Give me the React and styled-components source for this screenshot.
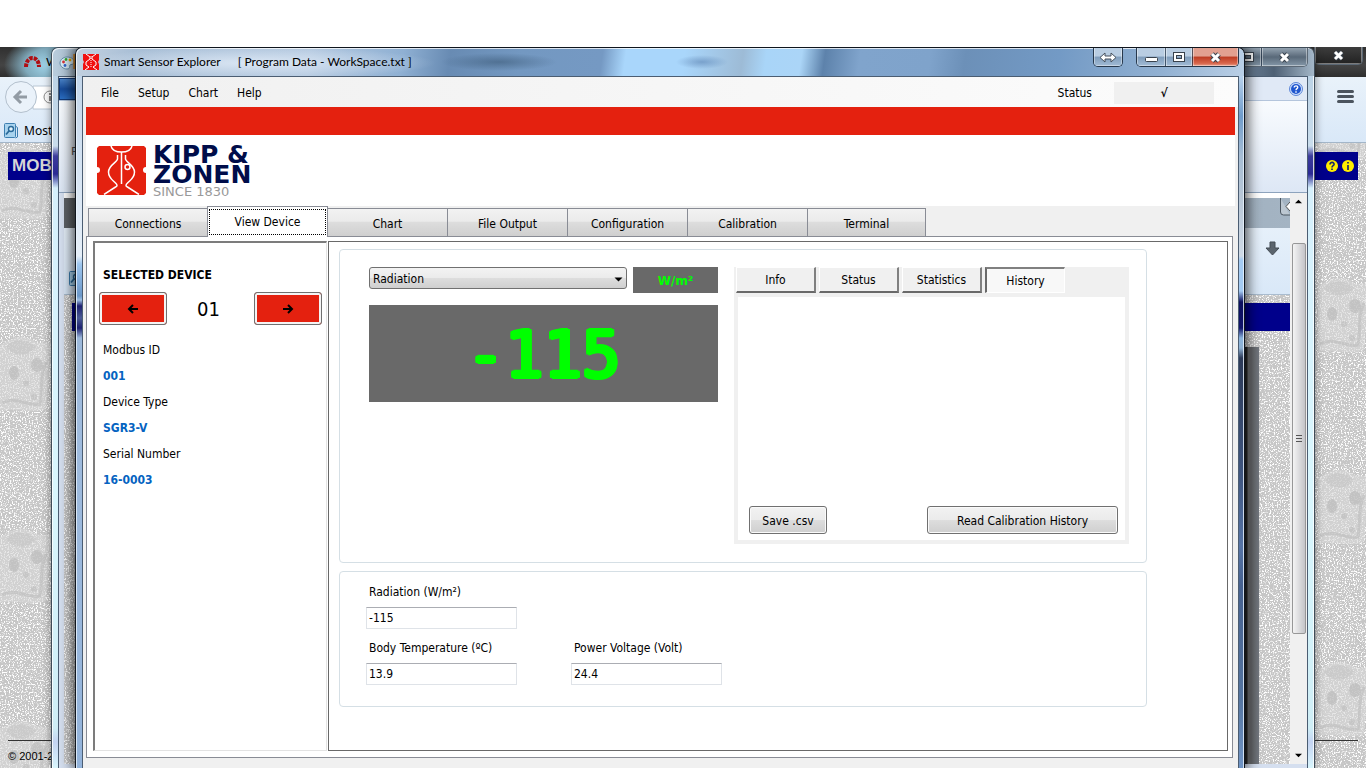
import React, { useState } from "react";
import styled, { createGlobalStyle, css } from "styled-components";

const GlobalStyle = createGlobalStyle`
  *, *::before, *::after { box-sizing: border-box; }
  html, body { margin: 0; height: 100%; overflow: hidden; background: #fff; }
  body { font-family: "DejaVu Sans Condensed", "DejaVu Sans", sans-serif; font-size: 12px; color: #000; }
  button, input, select { font: inherit; color: inherit; margin: 0; }
  button { cursor: default; }
`;

const uiFont = `Lato, "Noto Sans", sans-serif`;
const red = "#e4210f";
const navy = "#00008b";

/* ---------- desktop and window frames ---------- */

const Desktop = styled.div`
  position: relative;
  height: 100vh;
  overflow: hidden;
  background: #fff;
`;

const WindowFrame = styled.section`
  position: absolute;
  top: 47px;
  bottom: 0;
  left: ${(p) => p.$left}px;
  right: ${(p) => p.$right}px;
  display: flex;
  flex-direction: column;
  overflow: hidden;
`;

const GlassWindow = styled(WindowFrame)`
  border: 1px solid ${(p) => (p.$active ? "#10161e" : "#3f4c58")};
  border-bottom: 0;
  border-radius: 7px 7px 0 0;
  box-shadow: 0 0 ${(p) => (p.$active ? "14px 2px rgba(0, 0, 0, 0.75)" : "8px rgba(0, 0, 0, 0.45)")};
  clip-path: inset(0 -20px);
`;

const TitleBar = styled.header`
  display: flex;
  align-items: flex-start;
  height: 28px;
  padding: 0 5px 0 7px;
  border-radius: 6px 6px 0 0;
  box-shadow: inset 1px 1px 0 rgba(255, 255, 255, 0.75);
  font-family: ${uiFont};
`;

const MainTitleBar = styled(TitleBar)`
  background:
    radial-gradient(ellipse 180px 16px at 180px 15px, rgba(226, 236, 248, 0.85), rgba(200, 216, 235, 0) 100%),
    radial-gradient(ellipse 58px 9px at 423px 14px, rgba(60, 90, 120, 0.6), rgba(60, 90, 120, 0) 100%),
    radial-gradient(ellipse 26px 7px at 626px 14px, rgba(110, 150, 195, 0.8), rgba(120, 160, 200, 0) 100%),
    linear-gradient(98deg, #c3d1e0 0%, #a9bfd6 5%, #b3c8df 20%, #8fb0d3 28%, #688bb3 32%, #7398c1 38%, #7599c3 45%, #a9d6fb 47%, #a9d6fb 52%, #9dbbd6 57%, #a9d5f8 59%, #abd5f7 62%, #5d82ab 64%, #80a4cc 67%, #7fa3cb 73%, #6c90b8 76%, #739ac5 84%, #92b1d2 93%, #b9cfe6 100%);
`;

const BackTitleBar = styled(TitleBar)`
  padding: 0 6px 0 7px;
  background: linear-gradient(90deg, #b9cddd 0, #a5b9cb 40px, #7f97b0 50%, #6d8299 calc(100% - 70px), #4e6074 calc(100% - 40px), #a4b7c8 100%);
`;

const AppTitle = styled.h1`
  display: flex;
  gap: 17px;
  margin: 0;
  padding-left: 5px;
  font-size: 12px;
  line-height: 28px;
  font-weight: 400;
  white-space: nowrap;
  flex: 1;
`;

const TitleIcon = styled.span`
  display: flex;
  height: 28px;
  align-items: center;
  flex: 1;
  ${(p) => p.$fixed && css`flex: none;`}
`;

const Controls = styled.div`
  display: flex;
  height: ${(p) => (p.$short ? 18 : 19)}px;
  border: 1px solid ${(p) => (p.$dim ? "#5b6875" : "#27384c")};
  border-top: 0;
  border-radius: 0 0 5px 5px;
  overflow: hidden;
  margin-left: ${(p) => p.$gap || 0}px;
`;

const tones = {
  glass: "linear-gradient(#b9cde2 0 45%, #7f9cbb 50%, #a2bcd6)",
  close: "linear-gradient(#e2a090 0 45%, #bd3b22 50%, #d8664c 85%, #e8a08c)",
  dim: "linear-gradient(#93a2b0, #596979 50%, #8497a8)",
  dark: "linear-gradient(#3d3d3d, #222)",
};

const ControlButton = styled.button`
  display: flex;
  align-items: center;
  justify-content: center;
  width: ${(p) => p.$w}px;
  padding: 0;
  border: 0;
  border-left: 1px solid rgba(30, 45, 65, 0.7);
  background: ${(p) => tones[p.$tone]};
  box-shadow: inset 1px 0 0 rgba(255, 255, 255, 0.4), inset -1px -1px 0 rgba(255, 255, 255, 0.4);
  &:first-child { border-left: 0; }
`;

const Sides = styled.div`
  display: flex;
  flex: 1;
  min-height: 0;
`;

const MainSides = styled(Sides)`
  padding: 0 5px 0 6px;
  background:
    linear-gradient(#c3d6ea 0, #dfeaf6 140px, #e6eff8 180px, #9ec6ee 188px, #6b97c8 220px, #9ec0e4 224px, #1d2070 230px, #4a5a94 242px, #1d2070 252px, #9cb8da 262px, #9fbbdd 50%, #93b3da 100%) left / 20px 100% no-repeat,
    linear-gradient(#b9d2ec 0, #6f9ccb 40px, #a6bdd4 80px, #b7c6d6 120px, #cfdae6 180px, #a4cbf3 184px, #a4cbf3 215px, #0c0f5e 226px, #10136a 252px, #8ab4dd 262px, #8fb2d4 272px, #2c3a58 282px, #3f5680 400px, #5674a6 470px, #46618f 510px, #54749f 620px, #7195c5 100%) right / 20px 100% no-repeat;
  box-shadow: inset 1px 0 0 rgba(235, 244, 253, 0.8), inset -1px 0 0 rgba(235, 244, 253, 0.8);
`;

const BackSides = styled(Sides)`
  padding: 0 6px;
  background: linear-gradient(#bcd3e6 0, #c9ddec 70px, #3c3c9c 80px, #2a2a94 98px, #d5effb 112px, #d9f6fd 60%, #cfeef6 calc(100% - 40px), #c4d4f2 calc(100% - 26px), #d9f6fd 100%);
  box-shadow: inset 1px 0 0 rgba(255, 255, 255, 0.8), inset -1px 0 0 rgba(255, 255, 255, 0.8);
`;

const Client = styled.div`
  display: flex;
  flex-direction: column;
  flex: 1;
  min-width: 0;
  border: 1px solid #4b5d72;
  border-bottom: 0;
  background: #f0f0f0;
`;

/* ---------- browser behind everything ---------- */

const BrowserTitle = styled.div`
  display: flex;
  align-items: flex-start;
  height: 30px;
  padding: 0 3px 0 24px;
  background:
    radial-gradient(ellipse 46px 30px at 50px 18px, #a6dcf2 0, #7fa9bb 55%, rgba(60, 60, 60, 0) 100%),
    linear-gradient(#303030, #444 60%, #2e2e2e);
  font: 12px/30px ${uiFont};
`;

const BrowserTab = styled.div`
  display: flex;
  align-items: center;
  gap: 5px;
  flex: 1;
`;

const BrowserChrome = styled.div`
  display: flex;
  flex-direction: column;
  flex: none;
  height: 66px;
  border-bottom: 1px solid #a3b6c9;
  background: linear-gradient(#e9f2fa, #d9e8f8);
  font: 12px/20px "Noto Sans", sans-serif;
`;

const AddressRow = styled.div`
  display: flex;
  align-items: center;
  justify-content: space-between;
  height: 40px;
  padding: 0 12px 0 5px;
`;

const BookmarkRow = styled.div`
  display: flex;
  align-items: center;
  gap: 6px;
  height: 25px;
  padding: 2px 0 0 4px;
`;

const PlainButton = styled.button`
  display: flex;
  padding: 0;
  border: 0;
  background: none;
`;

const WebPage = styled.div`
  position: relative;
  flex: 1;
  min-height: 0;
  overflow: hidden;
  display: flex;
  flex-direction: column;
  padding: 9px 8px 0;
`;

const TextureSvg = styled.svg`
  position: absolute;
  inset: 0;
  width: 100%;
  height: 100%;
`;

const Banner = styled.div`
  position: relative;
  display: flex;
  align-items: center;
  justify-content: space-between;
  flex: none;
  height: 28px;
  padding: 0 3px 0 4px;
  background: ${navy};
  color: #d6d6d6;
  font: bold 17px "Liberation Sans", sans-serif;
`;

const PageFooter = styled.footer`
  position: relative;
  margin-top: auto;
  height: 28px;
  border-top: 1px solid #333;
  font: 11px/30px "Liberation Sans", sans-serif;
`;

/* ---------- image editor window ---------- */

const RibbonTabs = styled.div`
  display: flex;
  align-items: center;
  justify-content: space-between;
  height: 24px;
  padding-right: 4px;
  border-bottom: 1px solid #b4c5dc;
  background: #e0e9f6;
`;

const FileTab = styled.span`
  width: 60px;
  height: 22px;
  background: linear-gradient(#4a83c8, #174b99 50%, #2b6fc4);
  border: 1px solid #123a78;
`;

const Ribbon = styled.div`
  height: 92px;
  flex: none;
  padding: 41px 0 0 12px;
  border-bottom: 1px solid #8da3bd;
  background: linear-gradient(#f8fbfe, #dde7f5);
  font: 12px/18px ${uiFont};
  color: #555;
`;

const EditorBody = styled.div`
  display: flex;
  flex: 1;
  min-height: 0;
  padding: 0 0 4px 5px;
  background: #d5dfef;
`;

const Canvas = styled.div`
  flex: 1;
  display: flex;
  flex-direction: column;
  border-top: 5px solid #fff;
`;

const CapturedTitle = styled.div`
  display: flex;
  justify-content: flex-end;
  height: 30px;
  background: linear-gradient(90deg, #5e6266, #8a99a8 50%, #a4b4c3);
`;

const CapturedBar = styled.div`
  display: flex;
  align-items: flex-start;
  justify-content: space-between;
  height: 67px;
  padding: 13px 10px 7px 5px;
  border-bottom: 1px solid #a9bccf;
  background: linear-gradient(#e6f0fa, #d9e8f8);
`;

const CapturedBookmark = styled.span`
  display: flex;
  align-self: flex-end;
`;

const CapturedPage = styled.div`
  position: relative;
  flex: 1;
  display: flex;
  flex-direction: column;
  overflow: hidden;
  padding: 8px 0 0 8px;
`;

const CapturedShadow = styled.div`
  position: relative;
  flex: 1;
  margin: 16px 31px 0 20px;
  background: linear-gradient(90deg, #2a2a2a calc(100% - 12px), #77797c calc(100% - 11px), #66686b calc(100% - 8px), #72777f);
`;

const ScrollTrack = styled.div`
  display: flex;
  flex-direction: column;
  align-items: center;
  width: 17px;
  padding: 6px 1px;
  background: #f0f0f0;
`;

const ScrollThumb = styled.div`
  display: flex;
  align-items: center;
  justify-content: center;
  width: 14px;
  flex: 0 0 70%;
  margin: 39px 0 auto;
  border: 1px solid #979797;
  border-radius: 2px;
  background: linear-gradient(90deg, #f4f4f4, #dcdcde 50%, #c4c4c8);
`;

/* ---------- Smart Sensor Explorer ---------- */

const MenuBar = styled.nav`
  display: flex;
  align-items: center;
  height: 30px;
  flex: none;
  padding: 1px 24px 0 8px;
  background: linear-gradient(90deg, #f0f0f0, #fcfcfc);
`;

const MenuItem = styled.button`
  padding: 0 9px 0 10px;
  border: 0;
  background: none;
  line-height: 20px;
`;

const StatusLabel = styled.span`
  margin-left: auto;
  padding-right: 22px;
`;

const StatusBox = styled.output`
  width: 100px;
  line-height: 22px;
  background: #f0f0f0;
  text-align: center;
  font-weight: bold;
`;

const Content = styled.div`
  display: flex;
  flex-direction: column;
  flex: 1;
  min-height: 0;
  padding: 0 3px 10px;
`;

const RedStripe = styled.div`
  height: 28px;
  flex: none;
  background: ${red};
`;

const BrandBar = styled.div`
  display: flex;
  align-items: flex-start;
  gap: 7px;
  height: 71px;
  flex: none;
  padding: 10px 11px;
  background: #fff;
`;

const BrandMark = styled.span`
  display: flex;
  padding-top: 1px;
`;

const BrandText = styled.p`
  margin: 0;
  font: bold 25px/20px "DejaVu Sans", sans-serif;
  color: #000d4a;
`;

const BrandSince = styled.span`
  display: block;
  font-size: 13px;
  line-height: 14px;
  font-weight: 400;
  color: #999;
`;

const TabStrip = styled.div`
  display: flex;
  align-items: flex-end;
  height: 30px;
  flex: none;
  padding-left: 2px;
`;

const Tab = styled.button`
  width: ${(p) => (p.$last ? 118 : 120)}px;
  height: 28px;
  padding: 3px 0 0;
  border: 1px solid #898c95;
  border-left-width: ${(p) => (p.$first ? 1 : 0)}px;
  border-bottom: 0;
  background: linear-gradient(#f2f2f2, #ebebeb 45%, #dddddd 50%, #cfcfcf);
  line-height: 22px;
  ${(p) =>
    p.$selected &&
    css`
      position: relative;
      height: 31px;
      margin: 0 0 -1px -1px;
      width: 121px;
      padding: 1px;
      border-left-width: 1px;
      background: #fff;
      span {
        display: block;
        line-height: 24px;
        border: 1px dotted #000;
      }
    `}
`;

const TabPage = styled.div`
  display: flex;
  flex: 1;
  min-height: 0;
  margin-right: 2px;
  padding: 4px 4px 6px 6px;
  border: 1px solid #898c95;
  background: #fff;
`;

const DevicePanel = styled.aside`
  width: 234px;
  flex: none;
  margin-right: 1px;
  padding-top: 23px;
  border: 1px solid #e3e3e3;
  border-top: 2px solid #7c7c7c;
  border-left: 2px solid #7c7c7c;
`;

const PanelHeading = styled.h2`
  margin: 0;
  padding-left: 8px;
  font-size: 12px;
  line-height: 18px;
`;

const Stepper = styled.div`
  display: flex;
  align-items: center;
  justify-content: space-between;
  margin: 8px 4px 12px;
`;

const StepNumber = styled.output`
  padding-right: 4px;
  font-size: 20px;
`;

const StepButton = styled.button`
  display: flex;
  align-items: center;
  justify-content: center;
  width: 68px;
  height: 33px;
  padding: 0;
  border: 1px solid #707070;
  border-radius: 3px;
  background: ${red};
  box-shadow: inset 0 0 0 2px #f4f4f4;
`;

const Facts = styled.dl`
  margin: 0;
  padding-left: 8px;
  line-height: 26px;
`;

const FactValue = styled.dd`
  margin: 0;
  color: #0563c1;
  font-weight: bold;
`;

const DetailPanel = styled.main`
  display: flex;
  flex-direction: column;
  gap: 8px;
  flex: 1;
  min-width: 0;
  padding: 7px 80px 0 10px;
  border: 1px solid #696969;
`;

const Group = styled.section`
  border: 1px solid #d5dfe5;
  border-radius: 4px;
`;

const LiveGroup = styled(Group)`
  display: flex;
  gap: 16px;
  padding: 17px 17px 18px 29px;
`;

const Readout = styled.div`
  display: flex;
  flex-direction: column;
  gap: 12px;
  width: 349px;
  flex: none;
`;

const ReadoutHead = styled.div`
  display: flex;
  align-items: flex-start;
  gap: 6px;
`;

const SelectBox = styled.div`
  position: relative;
  flex: 1;
  svg {
    position: absolute;
    top: 10px;
    right: 4px;
    pointer-events: none;
  }
`;

const Select = styled.select`
  appearance: none;
  width: 100%;
  height: 22px;
  padding: 1px 3px 0;
  border: 1px solid #707070;
  border-radius: 3px;
  outline: 0;
  background: linear-gradient(#f3f3f3, #ebebeb 48%, #dddddd 52%, #cfcfcf);
`;

const UnitBox = styled.span`
  width: 85px;
  height: 26px;
  background: #696969;
  color: #0f0;
  font: bold 12px/28px "DejaVu Sans", sans-serif;
  text-align: center;
`;

const BigValue = styled.output`
  height: 97px;
  background: #696969;
  color: #0f0;
  font: 64px/100px "DejaVu Sans Mono", monospace;
  text-shadow:
    2px 0 #0f0, -2px 0 #0f0, 0 2px #0f0, 0 -2px #0f0,
    1px 1px #0f0, -1px 1px #0f0, 1px -1px #0f0, -1px -1px #0f0,
    2px 1px #0f0, -2px 1px #0f0, 2px -1px #0f0, -2px -1px #0f0;
  text-align: center;
`;

const InfoPanel = styled.div`
  display: flex;
  flex-direction: column;
  flex: 1;
  min-width: 0;
  height: 277px;
  padding: 0 4px 4px;
  background: #f0f0f0;
`;

const InfoTabs = styled.div`
  display: flex;
  gap: 3px;
  height: 30px;
  margin-left: -2px;
`;

const InfoTab = styled.button`
  width: 80px;
  height: 26px;
  padding: 0;
  background: #f0f0f0;
  border: 1px solid #fff;
  border-right: 2px solid #808080;
  border-bottom: 2px solid #696969;
  ${(p) =>
    p.$pressed &&
    css`
      padding: 0;
      background: #f8f8f8;
      border: 1px solid #fff;
      border-left: 2px solid #696969;
      border-top: 2px solid #808080;
    `}
`;

const InfoBody = styled.div`
  display: flex;
  align-items: flex-end;
  justify-content: space-between;
  flex: 1;
  padding: 0 7px 6px 11px;
  background: #fff;
`;

const PushButton = styled.button`
  height: 28px;
  padding: 1px 0 0;
  width: ${(p) => (p.$wide ? 191 : 78)}px;
  border: 1px solid #707070;
  border-radius: 3px;
  background: linear-gradient(#f2f2f2, #ebebeb 48%, #dddddd 52%, #cfcfcf);
  box-shadow: inset 0 0 0 1px #fafafa;
  white-space: nowrap;
`;

const ValuesGroup = styled(Group)`
  display: grid;
  grid-template-columns: 151px 151px;
  gap: 9px 54px;
  padding: 10px 26px 21px;
`;

const FieldBox = styled.div`
  display: flex;
  flex-direction: column;
  gap: 5px;
  grid-column: ${(p) => p.$column};
`;

const FieldLabel = styled.label`
  padding-left: 3px;
  line-height: 20px;
  white-space: nowrap;
`;

const TextBox = styled.input`
  height: 22px;
  padding: 0 2px;
  border: 1px solid #dfe3e8;
  border-top-color: #abadb3;
  outline: 0;
  background: #fff;
`;

/* ---------- drawings ---------- */

const Texture = ({ id, children }) => (
  <TextureSvg aria-hidden="true">
    <defs>
      <filter id={`${id}-noise`} x="0" y="0" width="100%" height="100%">
        <feTurbulence type="fractalNoise" baseFrequency="0.75" numOctaves="2" seed="4" />
        <feColorMatrix values="0 0 0 0 1  0 0 0 0 1  0 0 0 0 1  6 0 0 0 -3" />
      </filter>
      <pattern id={`${id}-cheese`} width="2000" height="192" patternUnits="userSpaceOnUse">
        {children}
      </pattern>
    </defs>
    <rect width="100%" height="100%" fill="#c6c6c6" />
    <rect width="100%" height="100%" filter={`url(#${id}-noise)`} />
    <rect width="100%" height="100%" fill={`url(#${id}-cheese)`} />
  </TextureSvg>
);

const Cheese = ({ x, y }) => (
  <g transform={`translate(${x} ${y})`}>
    <path d="M0 8C14 0 24-4 34 4c8 4 12 0 18 2l-6 66c-16 6-30-2-46 2z" fill="#d9d9d9" fillOpacity=".6" />
    <path d="M6 10c8-10 22-8 30 0-8 10-22 10-30 0z" fill="#c2c2c2" fillOpacity=".5" />
    <path d="M2 66c14-8 24 4 38 1 3-14-1-28 6-42" fill="none" stroke="#bcbcbc" strokeWidth="3" strokeOpacity=".6" />
    <ellipse cx="14" cy="36" rx="5" ry="7" fill="#b8b8b8" fillOpacity=".6" />
    <ellipse cx="37" cy="28" rx="6" ry="7" fill="#b8b8b8" fillOpacity=".6" />
    <circle cx="26" cy="46" r="3" fill="#b8b8b8" fillOpacity=".5" />
    <circle cx="34" cy="60" r="3" fill="#b8b8b8" fillOpacity=".5" />
  </g>
);

const CloseGlyph = () => (
  <svg width="13" height="11" viewBox="0 0 13 11">
    <path d="M3 2l7 7M10 2l-7 7" stroke="#39424d" strokeWidth="5" />
    <path d="M3 2l7 7M10 2l-7 7" stroke="#fff" strokeWidth="3" />
  </svg>
);

const MaxGlyph = () => (
  <svg width="12" height="10" viewBox="0 0 12 10">
    <rect x="2" y="2" width="8" height="6" fill="none" stroke="#39424d" strokeWidth="4" />
    <rect x="2" y="2" width="8" height="6" fill="none" stroke="#fff" strokeWidth="2" />
  </svg>
);

const MinGlyph = () => (
  <svg width="13" height="12" viewBox="0 0 13 12">
    <rect x=".5" y="6.500" width="12" height="4" rx="1" fill="#fff" stroke="#39424d" />
  </svg>
);

const ResizeGlyph = () => (
  <svg width="18" height="11" viewBox="0 0 18 11">
    <path d="M1 5.500L6 1v3h6V1l5 4.500-5 4.500V7H6v3z" fill="#fff" stroke="#444f5c" />
  </svg>
);

const HourglassIcon = () => (
  <svg width="16" height="16" viewBox="0 0 16 16">
    <path d="M0 0h16v6l-1 2 1 2v6H0v-6l1-2-1-2z" fill="#f01010" />
    <path d="M3 0l4 3v2L3 8v3l3 2-4 3M13 0L9 3v2l4 3v3l-3 2 4 3" fill="none" stroke="#fff" strokeWidth="1" />
    <path d="M8 2v12" stroke="#fff" strokeDasharray="1 1" />
  </svg>
);

const BrandIcon = () => (
  <svg width="49" height="49" viewBox="0 0 49 49">
    <path d="M2 0h45l2 2v19a3 3 0 0 0 0 6v20l-2 2H2l-2-2V27a3 3 0 0 0 0-6V2z" fill={red} />
    <g fill="none" stroke="#fff" strokeWidth="1.500">
      <path d="M14 0c1 4 5 6 10.500 6S34 4 35 0" />
      <path d="M24.500 6v32" />
      <path d="M20.500 9v4c0 3-9 6-9 13 0 6 4 8 7 11 2 2 2 3 0 4L7 48.500" />
      <path d="M28.500 9v4c0 3 9 6 9 13 0 6-4 8-7 11-2 2-2 3 0 4L42 48.500" />
      <circle cx="30.500" cy="21" r="2.500" />
    </g>
  </svg>
);

const ArrowGlyph = ({ flip }) => (
  <svg width="12" height="10" viewBox="0 0 12 10">
    <path d={flip ? "M1 5h9M6 1l4 4-4 4" : "M11 5H2M6 1L2 5l4 4"} fill="none" stroke="#000" strokeWidth="2" />
  </svg>
);

const Triangle = ({ up, small }) => (
  <svg width={small ? 7 : 9} height="5" viewBox="0 0 8 5">
    <path d={up ? "M0 4.500h8L4 .5z" : "M0 .5h8l-4 4z"} fill="#000" />
  </svg>
);

const BookmarkGlyph = () => (
  <svg width="14" height="16" viewBox="0 0 14 16">
    <rect x=".5" y=".5" width="11" height="14" rx="1" fill="#a9d3ee" stroke="#3d7fb0" />
    <path d="M12 3.500l1.500 1V14l-2 1" fill="none" stroke="#3d7fb0" />
    <circle cx="7" cy="6" r="2.500" fill="#e3f3fc" stroke="#2a6a9a" strokeWidth="1.400" />
    <path d="M5 8l-3 3.500" stroke="#2a6a9a" strokeWidth="1.800" />
  </svg>
);

const BackGlyph = () => (
  <svg width="60" height="34" viewBox="0 0 60 34">
    <path d="M28 6h32v23H28z" fill="#fff" stroke="#b8c6d4" />
    <circle cx="16" cy="17" r="15.500" fill="#eaf2fa" stroke="#b3c0cd" />
    <path d="M22 17H11M16 11l-6 6 6 6" fill="none" stroke="#929ba4" strokeWidth="3" />
    <circle cx="45" cy="17" r="6" fill="none" stroke="#888" />
    <path d="M45 13v2M45 16v5" stroke="#888" strokeWidth="2" />
  </svg>
);

const BurgerGlyph = () => (
  <svg width="17" height="14" viewBox="0 0 17 14">
    <path d="M1.500 1.500h14M1.500 6.500h14M1.500 11.500h14" stroke="#4b545e" strokeWidth="3" strokeLinecap="round" />
  </svg>
);

const TabGlyph = () => (
  <svg width="17" height="12" viewBox="0 0 17 12">
    <path d="M2 11c0-12 13-12 13 0" fill="none" stroke="#b00d12" strokeWidth="4" strokeDasharray="3.500 1" />
  </svg>
);

const HelpBadges = () => (
  <svg width="30" height="14" viewBox="0 0 30 14">
    <circle cx="7" cy="7" r="6" fill="#ffee00" />
    <circle cx="23" cy="7" r="6" fill="#ffee00" />
    <path d="M5 5.500c0-3 4.500-2.500 4 0C8.700 6.800 7 6.500 7 8.500M7 9.500v1.500M23 3v1.500M23 6v5" fill="none" stroke="#1a2a6a" strokeWidth="1.700" />
  </svg>
);

const RoundHelp = () => (
  <svg width="14" height="14" viewBox="0 0 14 14">
    <circle cx="7" cy="7" r="6.500" fill="#cfe0fb" stroke="#5d86d8" />
    <circle cx="7" cy="7" r="5" fill="#1f56cf" />
    <path d="M5.200 5.600c0-2.400 3.800-2.200 3.500 0C8.500 6.800 7 6.600 7 8.200M7 9.300v1.400" fill="none" stroke="#fff" strokeWidth="1.400" />
  </svg>
);

const PaletteGlyph = () => (
  <svg width="24" height="18" viewBox="0 0 24 18">
    <path d="M8 4c5 0 8 3 7 6-1 2-3 1-4 2s1 4-3 4c-4 0-7-3-7-6s3-6 7-6z" fill="#d9eef9" stroke="#6590ab" />
    <circle cx="4.500" cy="9" r="1.400" fill="#d33" />
    <circle cx="7" cy="6.500" r="1.400" fill="#3a3" />
    <circle cx="11" cy="7" r="1.400" fill="#e9a400" />
    <circle cx="6" cy="12.500" r="1.400" fill="#36c" />
    <path d="M15.500 1v15" stroke="#d98a2c" strokeWidth="2.500" />
  </svg>
);

const DownloadGlyph = () => (
  <svg width="15" height="15" viewBox="0 0 15 15">
    <path d="M5 1h5v6h4l-6.500 7L1 7h4z" fill="#5b646d" stroke="#454d55" />
  </svg>
);

const Grip = () => (
  <svg width="8" height="9" viewBox="0 0 8 9">
    <path d="M1 1.500h6M1 4.500h6M1 7.500h6" stroke="#555" />
  </svg>
);

const CornerGlyph = () => (
  <svg width="10" height="19" viewBox="0 0 10 19">
    <path d="M.5 0v14q0 3 3 3H10" fill="#bcc7d1" stroke="#4b5660" />
    <path d="M10 4L6 8.500l4 4.500" fill="#fff" stroke="#555" />
  </svg>
);

/* ---------- composition ---------- */

const Field = ({ id, label, value, column }) => (
  <FieldBox $column={column}>
    <FieldLabel htmlFor={id}>{label}</FieldLabel>
    <TextBox id={id} defaultValue={value} />
  </FieldBox>
);

const Browser = () => (
  <WindowFrame $left={0} $right={0}>
    <BrowserTitle>
      <BrowserTab>
        <TabGlyph />W
      </BrowserTab>
      <Controls $dim $short>
        <ControlButton $w={47} $tone="dark" aria-label="Close browser"><CloseGlyph /></ControlButton>
      </Controls>
    </BrowserTitle>
    <BrowserChrome>
      <AddressRow>
        <PlainButton aria-label="Back"><BackGlyph /></PlainButton>
        <PlainButton aria-label="Open menu"><BurgerGlyph /></PlainButton>
      </AddressRow>
      <BookmarkRow><BookmarkGlyph />Most</BookmarkRow>
    </BrowserChrome>
    <WebPage>
      <Texture id="page">
        <Cheese x={0} y={2} />
        <Cheese x={1318} y={-57} />
        <Cheese x={1318} y={135} />
      </Texture>
      <Banner>MOBO<HelpBadges /></Banner>
      <PageFooter>© 2001-2</PageFooter>
    </WebPage>
  </WindowFrame>
);

const ImageEditor = () => (
  <GlassWindow $left={51} $right={51}>
    <BackTitleBar>
      <TitleIcon><PaletteGlyph /></TitleIcon>
      <Controls $dim>
        <ControlButton $w={26} $tone="dim" aria-label="Maximize editor"><MaxGlyph /></ControlButton>
        <ControlButton $w={46} $tone="dim" aria-label="Close editor"><CloseGlyph /></ControlButton>
      </Controls>
    </BackTitleBar>
    <BackSides>
      <Client>
        <RibbonTabs><FileTab /><RoundHelp /></RibbonTabs>
        <Ribbon>P</Ribbon>
        <EditorBody>
          <Canvas>
            <CapturedTitle><CornerGlyph /></CapturedTitle>
            <CapturedBar>
              <CapturedBookmark><BookmarkGlyph /></CapturedBookmark>
              <DownloadGlyph />
            </CapturedBar>
            <CapturedPage>
              <Texture id="capture" />
              <Banner />
              <CapturedShadow />
            </CapturedPage>
          </Canvas>
          <ScrollTrack>
            <Triangle up small />
            <ScrollThumb><Grip /></ScrollThumb>
            <Triangle small />
          </ScrollTrack>
        </EditorBody>
      </Client>
    </BackSides>
  </GlassWindow>
);

const tabs = ["Connections", "View Device", "Chart", "File Output", "Configuration", "Calibration", "Terminal"];
const infoTabs = ["Info", "Status", "Statistics", "History"];
const facts = [
  ["Modbus ID", "001"],
  ["Device Type", "SGR3-V"],
  ["Serial Number", "16-0003"],
];

const SensorExplorer = () => {
  const [tab, setTab] = useState("View Device");
  const [infoTab, setInfoTab] = useState("History");
  return (
    <GlassWindow $left={75} $right={121} $active>
      <MainTitleBar>
        <TitleIcon $fixed><HourglassIcon /></TitleIcon>
        <AppTitle>
          <span>Smart Sensor Explorer</span>
          <span>[ Program Data - WorkSpace.txt ]</span>
        </AppTitle>
        <Controls>
          <ControlButton $w={28} $tone="glass" aria-label="Resize"><ResizeGlyph /></ControlButton>
        </Controls>
        <Controls $gap={13}>
          <ControlButton $w={28} $tone="glass" aria-label="Minimize"><MinGlyph /></ControlButton>
          <ControlButton $w={27} $tone="glass" aria-label="Maximize"><MaxGlyph /></ControlButton>
          <ControlButton $w={46} $tone="close" aria-label="Close"><CloseGlyph /></ControlButton>
        </Controls>
      </MainTitleBar>
      <MainSides>
        <Client>
          <MenuBar>
            {["File", "Setup", "Chart", "Help"].map((m) => <MenuItem key={m}>{m}</MenuItem>)}
            <StatusLabel>Status</StatusLabel>
            <StatusBox>√</StatusBox>
          </MenuBar>
          <Content>
            <RedStripe />
            <BrandBar>
              <BrandMark><BrandIcon /></BrandMark>
              <BrandText>
                KIPP &amp;
                <br />
                ZONEN
                <BrandSince>SINCE 1830</BrandSince>
              </BrandText>
            </BrandBar>
            <TabStrip role="tablist">
              {tabs.map((t, i) => (
                <Tab
                  key={t}
                  role="tab"
                  aria-selected={t === tab}
                  $first={i === 0}
                  $last={i === tabs.length - 1}
                  $selected={t === tab}
                  onClick={() => setTab(t)}
                >
                  <span>{t}</span>
                </Tab>
              ))}
            </TabStrip>
            <TabPage>
              <DevicePanel>
                <PanelHeading>SELECTED DEVICE</PanelHeading>
                <Stepper>
                  <StepButton aria-label="Previous device"><ArrowGlyph /></StepButton>
                  <StepNumber>01</StepNumber>
                  <StepButton aria-label="Next device"><ArrowGlyph flip /></StepButton>
                </Stepper>
                <Facts>
                  {facts.map(([name, value]) => (
                    <React.Fragment key={name}>
                      <dt>{name}</dt>
                      <FactValue>{value}</FactValue>
                    </React.Fragment>
                  ))}
                </Facts>
              </DevicePanel>
              <DetailPanel>
                <LiveGroup>
                  <Readout>
                    <ReadoutHead>
                      <SelectBox>
                        <Select aria-label="Measurement" defaultValue="Radiation">
                          <option>Radiation</option>
                        </Select>
                        <Triangle />
                      </SelectBox>
                      <UnitBox>W/m²</UnitBox>
                    </ReadoutHead>
                    <BigValue>-115</BigValue>
                  </Readout>
                  <InfoPanel>
                    <InfoTabs role="tablist">
                      {infoTabs.map((t) => (
                        <InfoTab key={t} role="tab" aria-selected={t === infoTab} $pressed={t === infoTab} onClick={() => setInfoTab(t)}>
                          {t}
                        </InfoTab>
                      ))}
                    </InfoTabs>
                    <InfoBody>
                      <PushButton>Save .csv</PushButton>
                      <PushButton $wide>Read Calibration History</PushButton>
                    </InfoBody>
                  </InfoPanel>
                </LiveGroup>
                <ValuesGroup>
                  <Field id="radiation" label="Radiation (W/m²)" value="-115" column={1} />
                  <Field id="temperature" label="Body Temperature (ºC)" value="13.9" column={1} />
                  <Field id="voltage" label="Power Voltage (Volt)" value="24.4" column={2} />
                </ValuesGroup>
              </DetailPanel>
            </TabPage>
          </Content>
        </Client>
      </MainSides>
    </GlassWindow>
  );
};

export default function App() {
  return (
    <Desktop>
      <GlobalStyle />
      <Browser />
      <ImageEditor />
      <SensorExplorer />
    </Desktop>
  );
}
